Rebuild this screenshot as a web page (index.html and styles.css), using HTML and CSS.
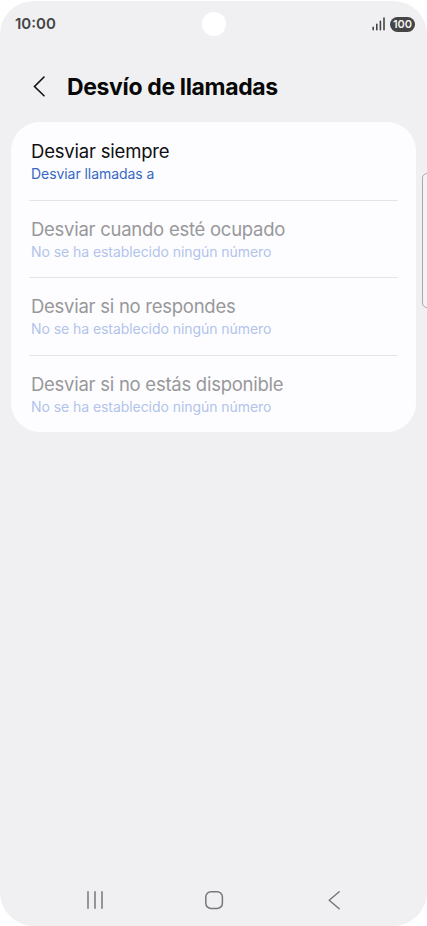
FILE: index.html
```html
<!DOCTYPE html>
<html lang="es">
<head>
<meta charset="utf-8">
<title>Desvío de llamadas</title>
<link rel="stylesheet" href="styles.css">
</head>
<body>
<div class="phone">
  <header class="status">
    <span class="clock">10:00</span>
    <span class="camera"></span>
    <span class="indicators">
      <svg class="signal" width="14" height="14" viewBox="0 0 14 14"><path d="M1.2 10.4v2.4M4.8 7.4v5.4M8.4 4.2v8.6M12 1v11.8"/></svg>
      <span class="battery">100</span>
    </span>
  </header>
  <div class="heading">
    <svg class="back" width="14" height="24" viewBox="0 0 14 24"><path d="M12 2 2.5 11.5l9.5 9.3"/></svg>
    <h1>Desvío de llamadas</h1>
  </div>
  <main class="card">
    <section class="row active"><h2>Desviar siempre</h2><p>Desviar llamadas a</p></section>
    <section class="row"><h2>Desviar cuando esté ocupado</h2><p>No se ha establecido ningún número</p></section>
    <section class="row"><h2>Desviar si no respondes</h2><p>No se ha establecido ningún número</p></section>
    <section class="row"><h2>Desviar si no estás disponible</h2><p>No se ha establecido ningún número</p></section>
  </main>
  <span class="edge"></span>
  <nav class="nav">
    <svg width="20" height="20" viewBox="0 0 20 20"><path d="M2 1.7v16.6M9 1.7v16.6M16 1.7v16.6"/></svg>
    <svg width="20" height="20" viewBox="0 0 20 20"><rect x="1.8" y="1.8" width="16.6" height="16.6" rx="5.2"/></svg>
    <svg width="20" height="20" viewBox="0 0 20 20"><path d="M16.2 1.7 6.2 10.2l10 8.5"/></svg>
  </nav>
</div>
</body>
</html>
```

FILE: styles.css
```css
* { box-sizing: border-box; }
body { margin: 0; background: #fff; font-family: Inter, "Liberation Sans", sans-serif; }
h1, h2, p { margin: 0; font-weight: 400; white-space: nowrap; }
svg { display: block; fill: none; }
.phone { position: relative; width: 427px; height: 926px; padding-top: 1px; display: flex; flex-direction: column; overflow: hidden; background: #f0f0f2; border-radius: 34px; border-top: 1px solid #fff; }
.status { height: 46px; display: grid; grid-template-columns: 1fr 24px 1fr; align-items: center; padding: 0 12px 2px 15px; color: #454545; }
.clock { font-size: 15px; font-weight: 600; line-height: 20px; }
.camera { width: 24px; height: 24px; border-radius: 50%; background: #fff; position: relative; left: -1.5px; top: -.5px; }
.indicators { display: flex; justify-content: flex-end; align-items: center; gap: 4px; }
.signal { stroke: #454545; stroke-width: 1.6; stroke-linecap: round; }
.battery { width: 25px; height: 15px; border-radius: 8px; background: #454545; color: #f2f2f2; font-size: 11px; line-height: 15px; font-weight: 600; text-align: center; }
.heading { height: 74px; padding: 3px 0 0 32px; display: flex; align-items: center; gap: 21px; }
.back { stroke: #111; stroke-width: 1.6; stroke-linecap: round; }
.heading h1 { font-size: 23px; line-height: 30px; font-weight: 700; letter-spacing: -.36px; padding-top: 1px; color: #080808; }
.card { width: 405px; height: 310px; margin-left: 11px; border-radius: 29px; background: #fdfdff; display: grid; grid-template-rows: repeat(4, 77.5px); padding: 0 18px; }
.row { padding: 17px 0 0 2px; color: #98989a; }
.row + .row { border-top: 1px solid #e5e5e8; padding-top: 16px; }
.row h2 { font-size: 18.5px; line-height: 24px; font-weight: 400; letter-spacing: -.26px; }
.row p { font-size: 14px; line-height: 20px; margin-top: 1px; letter-spacing: -.06px; color: #b2c4eb; }
.row.active { color: #101010; }
.row.active h2 { letter-spacing: -.2px; }
.row.active p { color: #3768c5; }
.edge { position: absolute; left: 422px; top: 172px; width: 12px; height: 135px; border: 1px solid #aaaaac; border-radius: 5px; background: #f3f3f5; }
.nav { margin-top: auto; height: 47px; display: flex; justify-content: space-between; padding: 11px 84px 0 85.5px; }
.nav svg { stroke: #77777a; stroke-width: 1.5; stroke-linecap: round; stroke-linejoin: round; }
```
